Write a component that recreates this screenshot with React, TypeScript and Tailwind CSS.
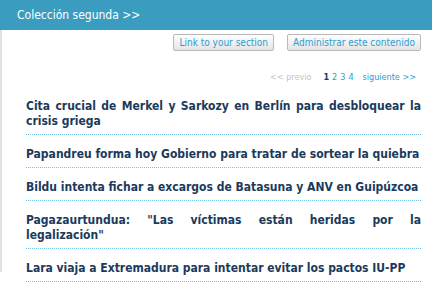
import React from 'react';

const items: string[] = [
	'Cita crucial de Merkel y Sarkozy en Berlín para desbloquear la crisis griega',
	'Papandreu forma hoy Gobierno para tratar de sortear la quiebra',
	'Bildu intenta fichar a excargos de Batasuna y ANV en Guipúzcoa',
	'Pagazaurtundua: "Las víctimas están heridas por la legalización"',
	'Lara viaja a Extremadura para intentar evitar los pactos IU-PP',
];

const btn =
	'px-[5px] h-[17px] leading-[15px] text-[10px] text-[#2a9dd4] border border-[#b9b9b9] rounded-[2px] bg-gradient-to-b from-white to-[#e4e4e4]';

export default function App() {
	return (
		<div className="w-[432px] h-[284px] bg-white overflow-hidden font-['DejaVu_Sans_Condensed','DejaVu_Sans',sans-serif]">
			{/* Header bar. */}
			<div className="h-[30px] bg-[#3a9dbf] pl-[17px] flex items-center">
				<span className="text-white text-[12px]">Colección segunda &gt;&gt;</span>
			</div>

			<div className="border-l-2 border-[#e2e2e2] h-[242px]">
				{/* Action buttons. */}
				<div className="flex justify-end gap-[13px] pr-[11px] pt-[4px]">
					<button type="button" className={btn}>Link to your section</button>
					<button type="button" className={btn}>Administrar este contenido</button>
				</div>

				{/* Pagination. */}
				<div className="flex justify-end items-center pr-[16px] mt-[20px] text-[9px] leading-[12px]">
					<span className="text-[#c4c4c4]">&lt;&lt; previo</span>
					<span className="ml-[12px] font-bold text-[#1b3a5b]">1</span>
					<span className="ml-[3px] text-[#2a9dd4]">2</span>
					<span className="ml-[3px] text-[#2a9dd4]">3</span>
					<span className="ml-[3px] text-[#2a9dd4]">4</span>
					<span className="ml-[9px] text-[#2a9dd4]">siguiente &gt;&gt;</span>
				</div>

				{/* Headlines. */}
				<ul className="pl-[24px] pr-[11px] mt-[4px]">
					{items.map((t) => (
						<li
							key={t}
							className="border-b border-dotted border-[#6cc3e0] pt-[12px] pb-[5px] text-[12px] leading-[15px] font-bold text-[#1b3a5b] text-justify"
						>
							{t}
						</li>
					))}
				</ul>
			</div>
		</div>
	);
}
